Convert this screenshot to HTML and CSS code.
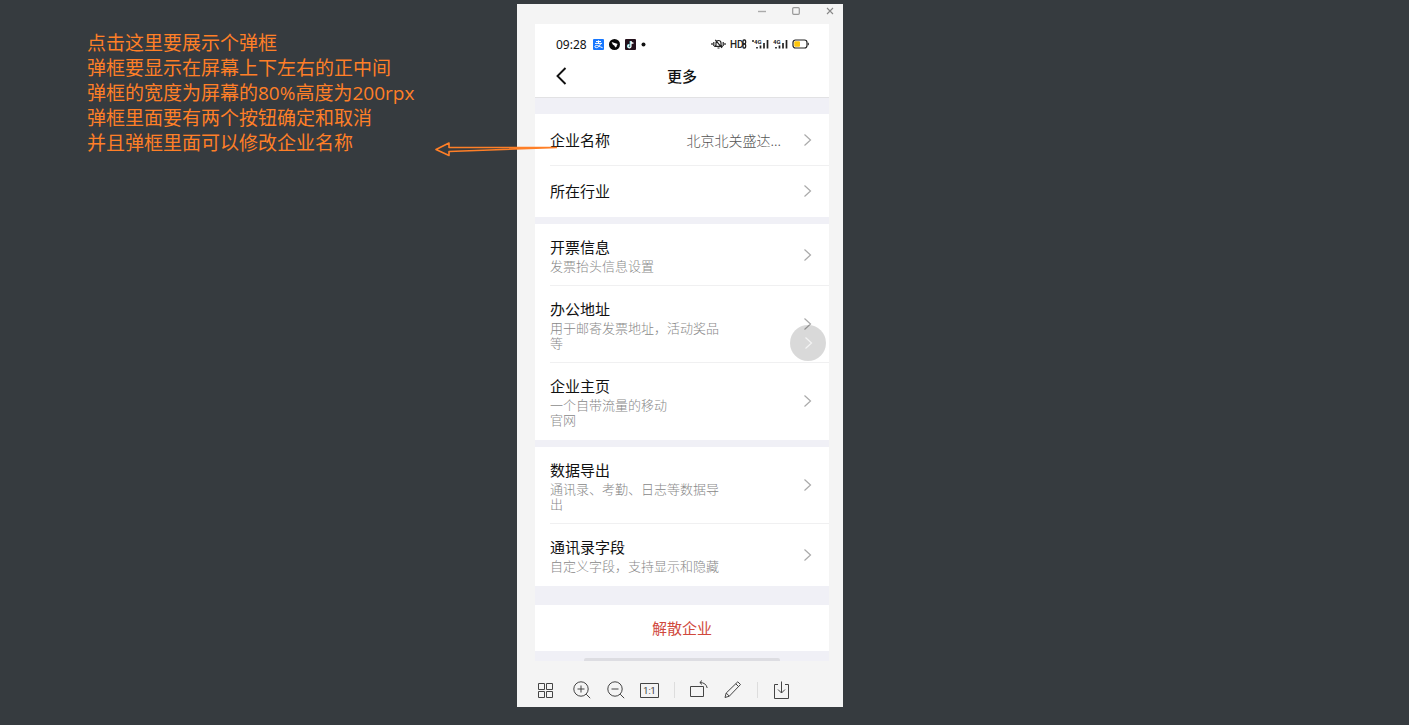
FILE: index.html
```html
<!DOCTYPE html>
<html lang="zh-CN">
<head>
<meta charset="utf-8">
<title>更多</title>
<link rel="stylesheet" href="styles.css">
</head>
<body>
<svg class="defs" width="0" height="0" aria-hidden="true">
  <symbol id="chevron" viewBox="0 0 9 14"><path d="M1.5 1.5 7.5 7l-6 5.500" fill="none" stroke="currentColor" stroke-width="1.2"/></symbol>
</svg>
<main class="stage">
  <p class="note">点击这里要展示个弹框<br>弹框要显示在屏幕上下左右的正中间<br>弹框的宽度为屏幕的80%高度为200rpx<br>弹框里面要有两个按钮确定和取消<br>并且弹框里面可以修改企业名称</p>

  <section class="window">
    <header class="titlebar">
      <button class="winbtn" aria-label="最小化"><svg width="10" height="10"><path d="M1 5.500h8" stroke="#aaa" stroke-width="1.400"/></svg></button>
      <button class="winbtn" aria-label="最大化"><svg width="10" height="10"><rect x="1.700" y="1.700" width="6.600" height="6.600" rx="1" fill="none" stroke="#999" stroke-width="1.200"/></svg></button>
      <button class="winbtn" aria-label="关闭"><svg width="10" height="10"><path d="M2 2l6 6M8 2 2 8" stroke="#888" stroke-width="1.100"/></svg></button>
    </header>

    <div class="phone">
      <div class="status">
        <div class="status-group">
          <span class="time">09:28</span>
          <svg width="11" height="11" viewBox="0 0 11 11"><rect width="11" height="11" rx="1" fill="#1677ff"/><path d="M3 2.500h5M2 4.400h7M5.500 1.300v3.100M7.600 4.600C6.800 7 5 8.700 3.300 8.700 1.500 8.700 1.500 6.500 3.300 6.400 5 6.300 7 7.800 9.600 8.700" fill="none" stroke="#fff"/></svg>
          <svg width="11" height="11" viewBox="0 0 11 11"><circle cx="5.500" cy="5.500" r="5.500" fill="#080808"/><path d="M2.600 3.100 6.500 4.300l2.300.600-1 1.200.1 1.500-1.100.100-.5 1.100-.8-2L3.800 5.500z" fill="#fff"/></svg>
          <svg width="11" height="11" viewBox="0 0 11 11"><rect width="11" height="11" rx="1" fill="#24111c"/><path d="M5.300 2v5.200A1.400 1.400 0 1 1 4 5.700" fill="none" stroke="#58d8df" stroke-width="1.300"/><path d="M6 2v5.200a1.500 1.500 0 1 1-1.400-1.400M6 2.300c.3 1.200 1.200 1.800 2.500 1.800" fill="none" stroke="#fff" stroke-width="1.200"/></svg>
          <svg width="5" height="11"><circle cx="2.500" cy="5.500" r="2" fill="#111"/></svg>
        </div>
        <div class="status-group signals">
          <svg width="15" height="12" viewBox="0 0 15 12"><path d="M1 5v2M2.800 4v4M14 5v2M12.200 4v4M4 8.300h7L10 7V5a2.500 2.500 0 0 0-5 0v2zM6.500 10h2M4.300 1.800l6.700 8" fill="none" stroke="#222" stroke-width="1.200"/></svg>
          <svg width="17" height="12" viewBox="0 0 17 12"><text class="hd" x="0" y="10">HD</text><rect x="13" y="2" width="2.600" height="3.800" rx="1" fill="none" stroke="#222" stroke-width="1.300"/><rect x="13" y="6" width="2.600" height="4" rx="1" fill="none" stroke="#222" stroke-width="1.300"/></svg>
          <svg width="18" height="12" viewBox="0 0 18 12"><path d="M1 3h2M6 10.500V9M9.500 10.500V7.500M13 10.500V5M16.500 10.500V2" stroke="#222" stroke-width="1.700"/><text class="net" x="3" y="6">4G</text></svg>
          <svg width="15" height="12" viewBox="0 0 15 12"><path d="M3 10.500V9M6.500 10.500V7.500M10 10.500V5M13.500 10.500V2" stroke="#222" stroke-width="1.700"/><text class="net" x="0" y="6">4G</text></svg>
          <svg width="17" height="12" viewBox="0 0 17 12"><rect x="1" y="2" width="14" height="8" rx="2.500" fill="#fff" stroke="#222" stroke-width="1.200"/><rect x="2.300" y="3.300" width="5.700" height="5.400" rx="1" fill="#fdc50b"/><path d="M16.300 4.800v2.400" stroke="#222"/></svg>
        </div>
      </div>
      <nav class="nav">
        <button class="back" aria-label="返回"><svg width="12" height="20" viewBox="0 0 12 20"><path d="M10.500 2 2.500 10l8 8" fill="none" stroke="#111" stroke-width="1.900"/></svg></button>
        <h1 class="nav-title">更多</h1>
      </nav>

      <div class="card card-first">
        <button class="row row-single"><span class="name">企业名称</span><span class="value">北京北关盛达...</span><svg class="chev"><use href="#chevron"/></svg></button>
        <button class="row row-single"><span class="name">所在行业</span><svg class="chev"><use href="#chevron"/></svg></button>
      </div>
      <div class="card">
        <button class="row"><span class="text"><span class="name">开票信息</span><span class="desc">发票抬头信息设置</span></span><svg class="chev"><use href="#chevron"/></svg></button>
        <div class="with-float">
          <button class="row"><span class="text"><span class="name">办公地址</span><span class="desc">用于邮寄发票地址，活动奖品<br>等</span></span><svg class="chev"><use href="#chevron"/></svg></button>
          <button class="float" aria-label="展开"><svg class="chev"><use href="#chevron"/></svg></button>
        </div>
        <button class="row"><span class="text"><span class="name">企业主页</span><span class="desc">一个自带流量的移动<br>官网</span></span><svg class="chev"><use href="#chevron"/></svg></button>
      </div>
      <div class="card">
        <button class="row"><span class="text"><span class="name">数据导出</span><span class="desc">通讯录、考勤、日志等数据导<br>出</span></span><svg class="chev"><use href="#chevron"/></svg></button>
        <button class="row"><span class="text"><span class="name">通讯录字段</span><span class="desc">自定义字段，支持显示和隐藏</span></span><svg class="chev"><use href="#chevron"/></svg></button>
      </div>
      <button class="dissolve">解散企业</button>
      <div class="home"></div>
    </div>

    <footer class="tools">
      <button class="tool" aria-label="缩略图"><svg width="20" height="20" viewBox="0 0 20 20"><path d="M.5 3.500h6v6h-6zM8.500 3.500h6v6h-6zM.5 11.500h6v6h-6zM8.500 11.500h6v6h-6z"/></svg></button>
      <button class="tool" aria-label="放大"><svg width="20" height="20" viewBox="0 0 20 20"><circle cx="9" cy="9" r="7.200"/><path d="M14.200 14.200l4 4M5.500 9h7M9 5.500v7"/></svg></button>
      <button class="tool" aria-label="缩小"><svg width="20" height="20" viewBox="0 0 20 20"><circle cx="9" cy="9" r="7.200"/><path d="M14.200 14.200l4 4M5.500 9h7"/></svg></button>
      <button class="tool" aria-label="原始大小"><svg width="20" height="20" viewBox="0 0 20 20"><path d="M.5 3.500h18v14H.5z"/><text class="ratio" x="9.500" y="14">1:1</text></svg></button>
      <span class="sep"></span>
      <button class="tool" aria-label="旋转"><svg width="20" height="20" viewBox="0 0 20 20"><path d="M1.500 6.500h13v10h-13zM11 2.500c4 0 6.500 2 7.200 5.500M13 .500l-2.200 2 2.200 2"/></svg></button>
      <button class="tool" aria-label="编辑"><svg width="20" height="20" viewBox="0 0 20 20"><path d="M2 17.500l1.200-4.500L14.800 1.800l2.700 2.700L6.300 16.200zM12.800 3.800l2.700 2.700M3.200 13l3.100 3.200"/></svg></button>
      <span class="sep"></span>
      <button class="tool" aria-label="保存"><svg width="20" height="20" viewBox="0 0 20 20"><path d="M6 4.500H2.500v14h14v-14H13M9.500 1.500v11.500M6 9.500l3.500 3.500L13 9.500"/></svg></button>
    </footer>

    <svg class="arrow" width="124" height="16" viewBox="0 0 124 16" aria-hidden="true"><path d="M122 5.500 14 5.500V1L1 7.500 14 13.500V9.500L122 5.500" fill="none" stroke="#ff7f27" stroke-width="1.600" stroke-linejoin="round"/></svg>
  </section>
</main>
</body>
</html>
```
FILE: styles.css
```css
* { box-sizing: border-box; }
body {
  margin: 0;
  min-height: 100vh;
  background: #363b3f;
  font-family: "Noto Sans CJK SC", sans-serif;
  color: #111;
}
button {
  margin: 0;
  padding: 0;
  border: 0;
  background: none;
  font: inherit;
  color: inherit;
  cursor: pointer;
}
svg { display: block; flex: none; }
.defs { position: absolute; }

.stage {
  display: grid;
  grid-template-columns: 517fr 326px 566fr;
  align-items: start;
  padding-top: 4px;
}
.note {
  margin: 0;
  padding: 27px 0 0 87px;
  font-family: "Open Sans", "Noto Sans CJK SC", sans-serif;
  font-size: 19px;
  line-height: 25px;
  color: #ff7f27;
  white-space: nowrap;
}

.window {
  position: relative;
  background: #f4f4f4;
}
.titlebar {
  display: flex;
  justify-content: flex-end;
  align-items: center;
  gap: 24px;
  height: 20px;
  padding: 0 8px 6px 0;
}
.arrow {
  position: absolute;
  left: -82px;
  top: 138px;
}

.phone {
  margin: 0 14px 0 18px;
  background: #f0f0f6;
}
.status {
  display: flex;
  align-items: center;
  justify-content: space-between;
  height: 40px;
  padding: 0 20px 0 21px;
  background: #fff;
}
.status-group {
  display: flex;
  align-items: center;
  gap: 5px;
}
.signals { gap: 4px; }
.time {
  margin-right: 1px;
  font-family: "Noto Sans", sans-serif;
  font-size: 12px;
}
.hd { font: 500 10px Roboto, sans-serif; fill: #222; }
.net { font: bold 6px Roboto, sans-serif; fill: #222; }
.nav {
  display: grid;
  grid-template-columns: 40px 1fr 40px;
  align-items: center;
  height: 34px;
  padding-bottom: 10px;
  background: #fff;
  border-bottom: 1px solid #e2e2e4;
}
.back { padding-left: 20px; }
.nav-title {
  margin: 0;
  font-size: 15px;
  line-height: 22px;
  font-weight: 500;
  text-align: center;
}

.card { margin-top: 7px; background: #fff; }
.card-first { margin-top: 16px; }
.row {
  display: flex;
  align-items: center;
  width: 100%;
  padding: 12px 17px 13px 15px;
  text-align: left;
  background: linear-gradient(#f0f0f1, #f0f0f1) 15px 100% / 100% 1px no-repeat;
}
.card > .row:last-child { background: none; }
.row-single { padding-top: 15px; padding-bottom: 15px; }
.row-single:last-child { padding-top: 14px; }
.text { flex: 1; }
.name {
  display: block;
  flex: 1;
  font-size: 15px;
  line-height: 22px;
}
.desc {
  display: block;
  font-size: 13px;
  line-height: 15px;
  font-weight: 300;
  color: #888;
}
.value {
  margin-right: 22px;
  font-size: 14px;
  line-height: 22px;
  font-weight: 300;
  color: #555;
}
.chev { width: 9px; height: 14px; color: #aaa; }
.with-float { position: relative; }
.float {
  position: absolute;
  right: 3px;
  bottom: 2px;
  display: flex;
  align-items: center;
  justify-content: center;
  width: 36px;
  height: 36px;
  border-radius: 50%;
  background: rgb(0 0 0 / 15%);
}
.float .chev { color: #f4f4f4; }
.dissolve {
  display: block;
  width: 100%;
  margin-top: 19px;
  padding: 12px 0;
  background: #fff;
  font-size: 15px;
  line-height: 22px;
  color: #d0493c;
}
.home {
  width: 67%;
  height: 3px;
  margin: 7px auto 0;
  background: #dddde2;
  border-radius: 2px 2px 0 0;
}

.tools {
  display: flex;
  align-items: center;
  gap: 14px;
  padding: 19px 16px 7px 21px;
}
.tool svg { fill: none; stroke: #444; stroke-width: 1; }
.tool .ratio {
  font: 9px Roboto, sans-serif;
  fill: #333;
  stroke: none;
  text-anchor: middle;
}
.sep { width: 1px; height: 16px; background: #ddd; }
```
